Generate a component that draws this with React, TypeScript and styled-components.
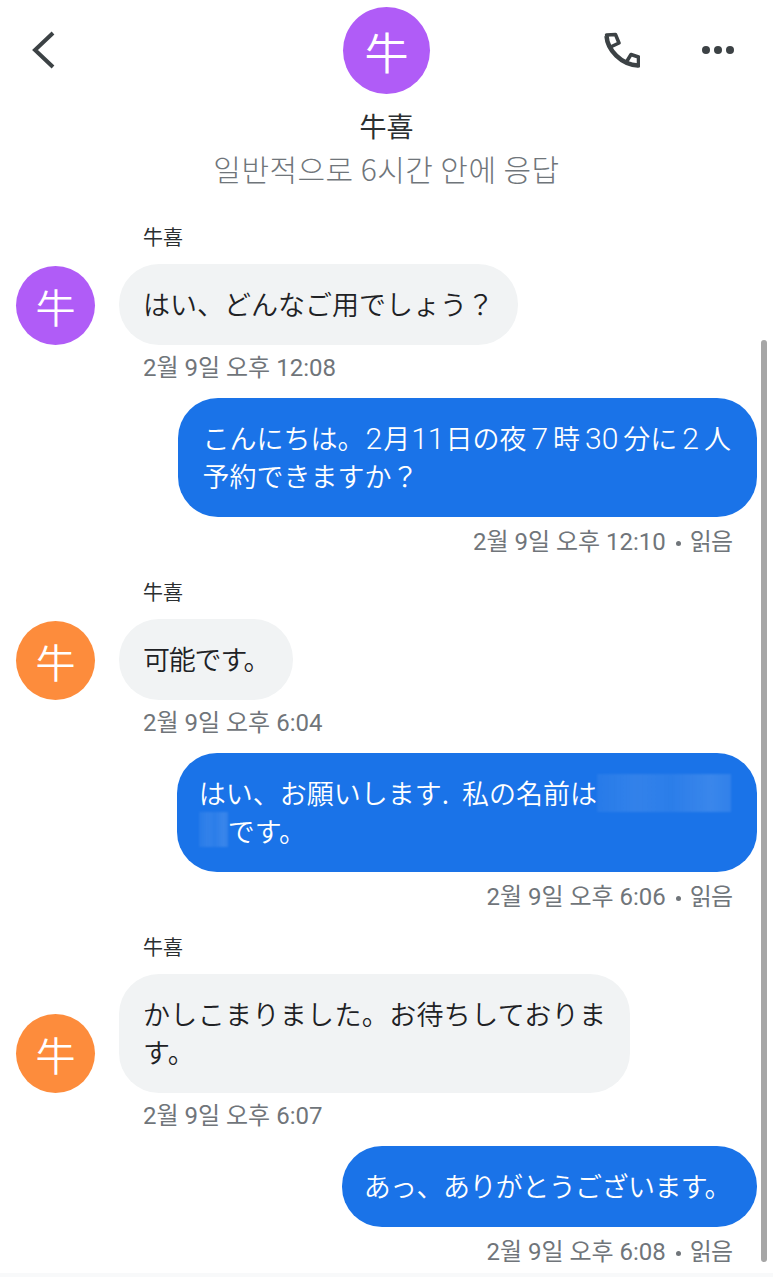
import React from 'react';
import styled, { createGlobalStyle } from 'styled-components';

const Global = createGlobalStyle`
html, body {
  margin: 0;
  padding: 0;
  background: #fff;
}
body {
  font-family: "Roboto", "Noto Sans CJK JP", "Noto Sans CJK KR", sans-serif;
}
`;

const Page = styled.div`
position: relative;
width: 773px;
height: 1277px;
overflow: hidden;
background: #fff;
`;

const Header = styled.header`
display: grid;
grid-template-columns: 312px 87px 1fr;
padding: 7px 39px 0 31px;
`;

const BackButton = styled.div`
padding-top: 24px;
`;

const Actions = styled.div`
display: flex;
justify-content: flex-end;
align-items: flex-start;
gap: 62px;
padding-top: 25px;
`;

const Dots = styled.div`
display: flex;
gap: 4px;
margin-top: 14px;
`;

const Dot = styled.span`
width: 8px;
height: 8px;
border-radius: 50%;
background: #3c4245;
`;

const Avatar = styled.div<{ $color: string; $size: number }>`
flex: none;
display: flex;
align-items: center;
justify-content: center;
width: ${p => p.$size}px;
height: ${p => p.$size}px;
border-radius: 50%;
background: ${p => p.$color};
color: #fff;
font-size: ${p => Math.round(p.$size * 0.5)}px;
font-family: "Noto Sans CJK KR", sans-serif;
font-weight: 350;
`;

const TitleBlock = styled.div`
text-align: center;
`;

const Title = styled.div`
font-size: 27px;
line-height: 40px;
color: #2b2f31;
font-family: "Noto Sans CJK KR", sans-serif;
font-weight: 400;
margin-top: 12px;
`;

const Subtitle = styled.div`
font-size: 30px;
line-height: 45px;
letter-spacing: 0.45px;
color: #6f757a;
font-weight: 300;
font-family: "Noto Sans CJK KR", sans-serif;
`;

const Thread = styled.main`
display: flex;
flex-direction: column;
padding: 0 16px;
margin-top: 32px;
`;

const Name = styled.div`
margin-left: 127px;
font-size: 20px;
line-height: 28px;
color: #2b2f31;
font-family: "Noto Sans CJK KR", sans-serif;
`;

const IncomingRow = styled.div`
display: flex;
align-items: flex-end;
gap: 24px;
margin-top: 13px;
`;

const Bubble = styled.div<{ $mine?: boolean; $left?: number; $tracking?: number }>`
padding: 20.5px ${p => (p.$mine ? 26 : 24)}px 22.5px ${p => p.$left ?? 24}px;
border-radius: 40px;
font-size: 27px;
line-height: 38px;
white-space: nowrap;
letter-spacing: ${p => p.$tracking ?? 0}px;
font-family: "Noto Sans CJK JP", sans-serif;
font-weight: 350;
background: ${p => (p.$mine ? '#1a73e8' : '#f1f3f4')};
color: ${p => (p.$mine ? '#fff' : '#202124')};
`;

const MineRow = styled.div`
display: flex;
justify-content: flex-end;
`;

const Num = styled.span<{ $gap: number }>`
margin: 0 ${p => p.$gap}px;
font-family: "Roboto", sans-serif;
font-size: 30px;
font-weight: 300;
line-height: 1;
`;

const Wide = styled.span`
margin-right: 7px;
`;

const Stamp = styled.div<{ $mine?: boolean }>`
font-size: 24px;
line-height: 30px;
color: #70757a;
font-family: "Roboto", "Noto Sans CJK KR", sans-serif;
${p => (p.$mine ? 'text-align: right; margin: 10px 25px 0 0;' : 'margin: 8px 0 0 127px;')}
`;

const StampDot = styled.span`
display: inline-block;
width: 5px;
height: 5px;
margin: 0 9px 0 10px;
border-radius: 50%;
background: #70757a;
vertical-align: middle;
`;

const ReadMark = styled.span`
letter-spacing: -1px;
`;

const Group = styled.section<{ $gap: number }>`
margin-top: ${p => p.$gap}px;
`;

const Redacted = styled.span<{ $w: number; $h: number }>`
display: inline-block;
vertical-align: top;
width: ${p => p.$w}px;
height: ${p => p.$h}px;
background: linear-gradient(90deg, rgba(255, 255, 255, 0.06), rgba(255, 255, 255, 0.11) 30%, rgba(255, 255, 255, 0.08) 55%, rgba(255, 255, 255, 0.14) 85%, rgba(255, 255, 255, 0.1));
filter: blur(1px);
`;

const Scrollbar = styled.div`
position: absolute;
left: 761px;
top: 340px;
width: 6px;
height: 922px;
border-radius: 3px;
background: #a6a6a6;
`;

const Footer = styled.div`
position: absolute;
left: 0;
right: 0;
bottom: 0;
height: 4px;
background: #f8f9fa;
`;

function BackIcon() {
  return (
    <svg width="24" height="38" viewBox="0 0 24 38" fill="none" style={{ display: 'block' }}>
      <path d="M22 2 L4 19 L22 36" stroke="#3c4245" strokeWidth="4" />
    </svg>
  );
}

function PhoneIcon() {
  return (
    <svg width="36" height="36" viewBox="0 0 36 36" fill="none" style={{ display: 'block' }}>
      <path d="M2.5 4 C3.5 18 17 32.5 34 33.5" stroke="#3c4245" strokeWidth="4.5" />
      <path
        d="M2.5 3 L11.5 2.5 L15 11 L6.5 15 M23 29 L27 22.5 L34.5 25 L34.5 34"
        stroke="#3c4245"
        strokeWidth="3.5"
        strokeLinejoin="round"
        strokeLinecap="round"
      />
    </svg>
  );
}

function TheirMessage({ color, gap, stamp, children, tracking }: { color: string; gap: number; stamp: string; children: React.ReactNode; tracking?: number }) {
  return (
    <Group $gap={gap}>
      <Name>牛喜</Name>
      <IncomingRow>
        <Avatar $color={color} $size={79}>牛</Avatar>
        <Bubble $tracking={tracking}>{children}</Bubble>
      </IncomingRow>
      <Stamp>{stamp}</Stamp>
    </Group>
  );
}

function MyMessage({ gap, stamp, children, left, tracking }: { gap: number; stamp: string; children: React.ReactNode; left?: number; tracking?: number }) {
  return (
    <Group $gap={gap}>
      <MineRow>
        <Bubble $mine $left={left} $tracking={tracking}>{children}</Bubble>
      </MineRow>
      <Stamp $mine>{stamp}<StampDot /><ReadMark>읽음</ReadMark></Stamp>
    </Group>
  );
}

export default function App() {
  return (
    <Page>
      <Global />
      <Header>
        <BackButton><BackIcon /></BackButton>
        <Avatar $color="#b05cf7" $size={87}>牛</Avatar>
        <Actions>
          <PhoneIcon />
          <Dots><Dot /><Dot /><Dot /></Dots>
        </Actions>
      </Header>
      <TitleBlock>
        <Title>牛喜</Title>
        <Subtitle>일반적으로 6시간 안에 응답</Subtitle>
      </TitleBlock>
      <Thread>
        <TheirMessage color="#b05cf7" gap={0} stamp="2월 9일 오후 12:08">はい、どんなご用でしょう？</TheirMessage>
        <MyMessage gap={15} left={25} stamp="2월 9일 오후 12:10">
          こんにちは。<Num $gap={1}>2</Num>月<Num $gap={1}>11</Num>日の夜<Num $gap={5}>7</Num>時<Num $gap={5}>30</Num>分に<Num $gap={5}>2</Num>人<br />予約できますか？
        </MyMessage>
        <TheirMessage color="#fd8c3c" gap={21} tracking={-1.2} stamp="2월 9일 오후 6:04">可能です。</TheirMessage>
        <MyMessage gap={15} left={22} stamp="2월 9일 오후 6:06">
          はい、お願いします.<Wide> </Wide>私の名前は<Redacted $w={134} $h={38} /><br /><Redacted $w={29} $h={35} />です。
        </MyMessage>
        <TheirMessage color="#fd8c3c" gap={21} tracking={0.35} stamp="2월 9일 오후 6:07">かしこまりました。お待ちしておりま<br />す。</TheirMessage>
        <MyMessage gap={15} left={22} tracking={-0.57} stamp="2월 9일 오후 6:08">あっ、ありがとうございます。</MyMessage>
      </Thread>
      <Scrollbar />
      <Footer />
    </Page>
  );
}
